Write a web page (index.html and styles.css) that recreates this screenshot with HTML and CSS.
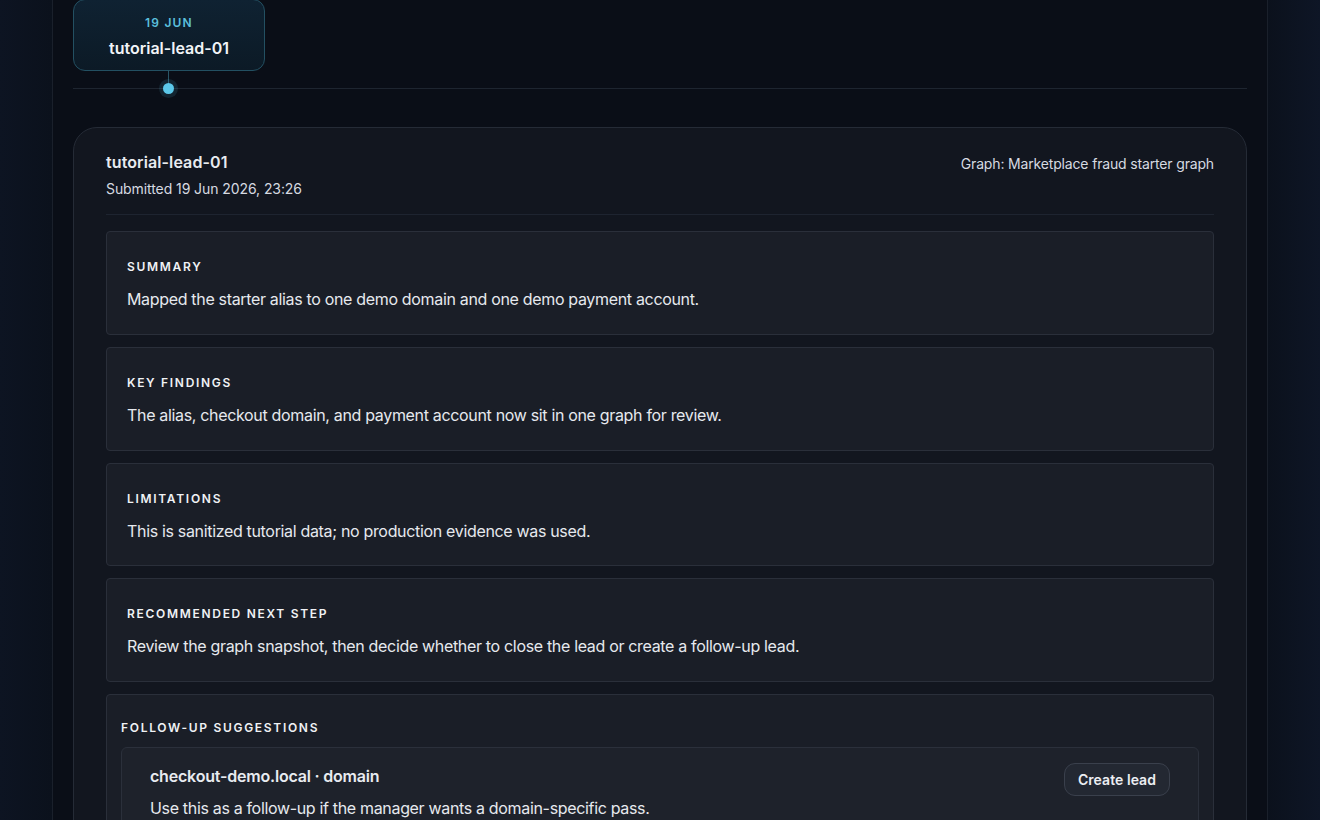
FILE: index.html
```html
<!DOCTYPE html>
<html lang="en">
<head>
  <meta charset="UTF-8">
  <title>Lead submissions</title>
  <link rel="stylesheet" href="styles.css">
</head>
<body>
  <div class="shell">
    <div class="lane">
      <div class="tl-card">
        <div class="tl-date">19 JUN</div>
        <div class="tl-title">tutorial-lead-01</div>
      </div>
      <span class="stem"></span>
      <span class="dot"></span>
    </div>

    <div class="report">
      <div class="report-head">
        <div>
          <div class="report-title">tutorial-lead-01</div>
          <div class="report-meta">Submitted 19 Jun 2026, 23:26</div>
        </div>
        <div class="report-graph">Graph: Marketplace fraud starter graph</div>
      </div>

      <div class="section">
        <div class="label">Summary</div>
        <p>Mapped the starter alias to one demo domain and one demo payment account.</p>
      </div>
      <div class="section">
        <div class="label">Key findings</div>
        <p>The alias, checkout domain, and payment account now sit in one graph for review.</p>
      </div>
      <div class="section">
        <div class="label">Limitations</div>
        <p>This is sanitized tutorial data; no production evidence was used.</p>
      </div>
      <div class="section">
        <div class="label">Recommended next step</div>
        <p>Review the graph snapshot, then decide whether to close the lead or create a follow-up lead.</p>
      </div>

      <div class="section followups">
        <div class="label">Follow-up suggestions</div>
        <div class="suggestion">
          <div>
            <div class="sug-title">checkout-demo.local · domain</div>
            <p>Use this as a follow-up if the manager wants a domain-specific pass.</p>
          </div>
          <button>Create lead</button>
        </div>
      </div>
    </div>
  </div>
</body>
</html>
```

FILE: styles.css
```css
body {
  margin: 0;
  font-family: Inter, "Noto Sans", sans-serif;
  background: linear-gradient(90deg, #0d1422 0%, #0b111c 4%, #0b111c 96%, #0e1626 100%);
  color: #e8ebf0;
  height: 820px;
  overflow: hidden;
}
.shell {
  width: 1174px;
  margin: 0 auto;
  min-height: 820px;
  padding: 0 20px;
  background: #0a0e17;
  border-left: 1px solid #1a202b;
  border-right: 1px solid #1a202b;
}
.lane {
  position: relative;
  height: 89px;
  border-bottom: 1px solid #1e2530;
  margin-bottom: 38px;
}
.tl-card {
  width: 192px;
  height: 72px;
  margin-top: -1px;
  box-sizing: border-box;
  border: 1px solid #235062;
  border-radius: 12px;
  background: linear-gradient(180deg, #0f2232 0%, #0c1a26 100%);
  text-align: center;
  padding-top: 15px;
}
.tl-date {
  font-size: 12px;
  font-weight: 600;
  letter-spacing: 1.2px;
  color: #5bbfdc;
  line-height: 15px;
}
.tl-title {
  font-size: 16px;
  font-weight: 600;
  color: #f2f4f7;
  margin-top: 8px;
  line-height: 20px;
}
.stem {
  position: absolute;
  left: 95px;
  top: 71px;
  width: 1px;
  height: 14px;
  background: #2a5566;
}
.dot {
  position: absolute;
  left: 90px;
  top: 84px;
  width: 11px;
  height: 11px;
  border-radius: 50%;
  background: #5cc8ea;
  box-shadow: 0 0 0 4px rgba(92, 200, 234, 0.12);
}
.report {
  background: #12161f;
  border: 1px solid #252b36;
  border-radius: 24px;
  padding: 24px 32px 40px;
}
.report-head {
  display: flex;
  justify-content: space-between;
  align-items: flex-start;
  padding-bottom: 16px;
  border-bottom: 1px solid #1e2430;
  margin-bottom: 16px;
}
.report-title {
  font-size: 16px;
  font-weight: 600;
  line-height: 20px;
  letter-spacing: 0.1px;
}
.report-meta {
  font-size: 14px;
  line-height: 18px;
  margin-top: 8px;
  color: #d6dae1;
  letter-spacing: -0.08px;
}
.report-graph {
  font-size: 14px;
  line-height: 18px;
  margin-top: 3px;
  color: #d6dae1;
  letter-spacing: -0.16px;
}
.section {
  background: #1a1e27;
  border: 1px solid #2a2f3a;
  border-radius: 4px;
  padding: 27px 20px 22.75px;
  margin-bottom: 12px;
}
.label {
  font-size: 12px;
  font-weight: 600;
  letter-spacing: 1.7px;
  text-transform: uppercase;
  line-height: 16px;
  color: #f0f2f5;
}
.section p {
  margin: 12px 0 0;
  font-size: 16px;
  line-height: 24px;
  color: #e6e9ee;
  letter-spacing: -0.33px;
}
.followups {
  padding: 25px 14px 14px;
}
.suggestion {
  margin-top: 11px;
  background: #1e222b;
  border: 1px solid #2b303b;
  border-radius: 6px;
  padding: 18px 28px 20px;
  display: flex;
  justify-content: space-between;
  align-items: flex-start;
}
.sug-title {
  font-size: 16px;
  font-weight: 600;
  line-height: 20px;
  letter-spacing: -0.2px;
}
.suggestion p {
  margin-top: 10px;
}
button {
  font-family: inherit;
  font-size: 14px;
  font-weight: 600;
  color: #eceef2;
  background: #232832;
  border: 1px solid #3a404c;
  border-radius: 11px;
  padding: 7px 13px;
  margin-top: -3px;
  letter-spacing: 0.05px;
  cursor: pointer;
}
```
